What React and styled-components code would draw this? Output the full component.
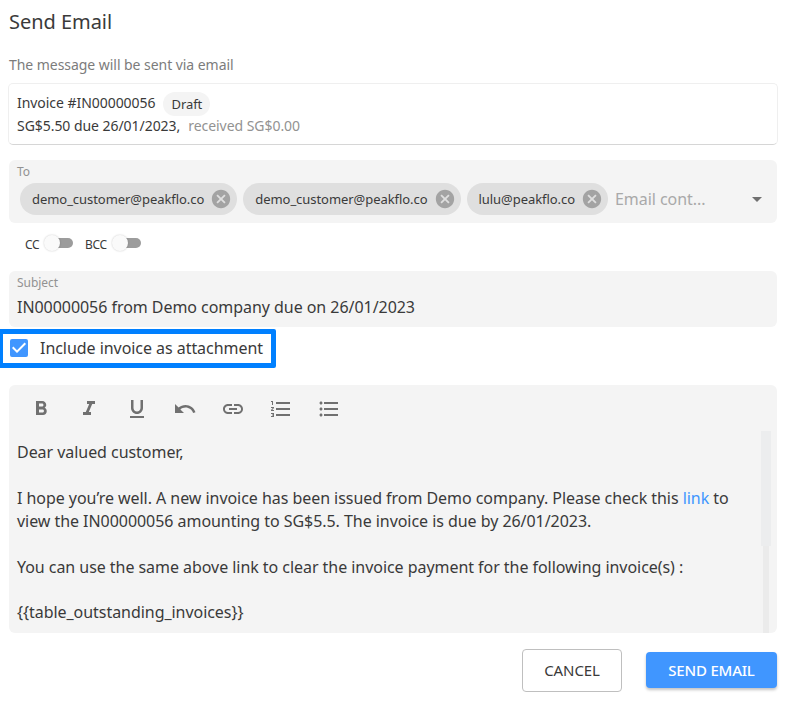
import React from "react";
import styled, { createGlobalStyle } from "styled-components";
import {
  MdArrowDropDown,
  MdCancel,
  MdCheckBox,
  MdFormatBold,
  MdFormatItalic,
  MdFormatListBulleted,
  MdFormatListNumbered,
  MdFormatUnderlined,
  MdLink,
  MdUndo,
} from "react-icons/md";

const GlobalStyle = createGlobalStyle`
  *, *::before, *::after { box-sizing: border-box; }
  body {
    margin: 0;
    background: #fff;
    color: #3a3a3a;
    font-family: "Noto Sans", sans-serif;
    font-size: 16px;
    letter-spacing: -0.048px;
  }
`;

const Dialog = styled.main`
  display: flex;
  flex-direction: column;
  width: 789px;
  height: 714px;
  padding: 0 12px 0 9px;
  overflow: hidden;
`;

const Title = styled.h1`
  margin: 0;
  font-size: 20px;
  font-weight: 400;
  line-height: 44px;
  letter-spacing: -0.04px;
`;

const Subtitle = styled.p`
  margin: 10px 0 7px;
  color: #7c7c7c;
  font-size: 14px;
  line-height: 22px;
`;

const InvoiceCard = styled.section`
  height: 62px;
  margin: 0 -1px;
  padding: 7px 8px 0;
  border: 1px solid #efefef;
  border-bottom-color: #d6d6d6;
  border-radius: 5px;
  font-size: 14px;
`;

const InvoiceRow = styled.div`
  display: flex;
  align-items: center;
  gap: 8px;
  height: 23px;
  white-space: pre;
`;

const StatusBadge = styled.span`
  height: 24px;
  padding: 0 8px;
  border-radius: 12px;
  background: #f4f4f4;
  font-size: 13px;
  line-height: 24px;
  margin-top: 2px;
`;

const Muted = styled.span`
  color: #929292;
`;

const Field = styled.section`
  height: ${({ $height }) => $height}px;
  margin-top: ${({ $gap }) => $gap}px;
  padding: 3px 8px 0;
  border-radius: 6px;
  background: #f4f4f4;
`;

const FieldLabel = styled.div`
  color: #929292;
  font-size: 12px;
  line-height: 18px;
`;

const Recipients = styled.div`
  display: flex;
  align-items: center;
  gap: 6px;
  margin: 2px 0 0 3px;
`;

const Chip = styled.span`
  display: flex;
  align-items: center;
  height: 32px;
  padding: 0 5px 0 12px;
  gap: 6px;
  border-radius: 16px;
  background: #dfdfdf;
  font-size: 13px;
  letter-spacing: -0.055px;

  svg { color: #a3a3a3; }
`;

const Placeholder = styled.span`
  flex: 1;
  margin-left: 1px;
  color: #a9a9a9;
`;

const DropIcon = styled(MdArrowDropDown)`
  color: #707070;
`;

const CopyOptions = styled.div`
  display: flex;
  height: 48px;
  padding: 8px 0 0 16px;
  gap: 12px;
`;

const CopyOption = styled.label`
  display: flex;
  height: 24px;
  gap: 4.7px;
  font-size: 12px;
  line-height: 27px;
  letter-spacing: -0.3px;
`;

const Switch = styled.span`
  display: flex;
  align-items: center;
  width: 29px;
  height: 24px;

  &::before {
    content: "";
    flex: none;
    z-index: 1;
    width: 16px;
    height: 16px;
    border-radius: 50%;
    background: #fafafa;
    box-shadow: 0 0 2px rgba(0, 0, 0, 0.22);
  }

  &::after {
    content: "";
    flex: none;
    width: 26px;
    height: 10px;
    margin-left: -13px;
    border-radius: 5px;
    background: #9c9c9c;
  }
`;

const SubjectValue = styled.div`
  line-height: 30px;
`;

const AttachmentOption = styled.label`
  display: flex;
  align-items: center;
  width: 276px;
  height: 39px;
  margin: 2px 0 0 -9px;
  padding: 0 0 1px 4px;
  gap: 9px;
  border: solid #0080ff;
  border-width: 5px 5px 5px 3px;
  border-radius: 0 2px 2px 0;

  svg { color: #4096ff; }
`;

const Editor = styled.section`
  display: flex;
  flex-direction: column;
  height: 248px;
  margin-top: 17px;
  border-radius: 6px;
  background: #f4f4f4;
  overflow: hidden;
`;

const Toolbar = styled.div`
  display: flex;
  flex: none;
  height: 46px;
  padding: 12px 0 0 20px;
  gap: 24px;
  color: #707070;
`;

const EditorBody = styled.div`
  display: flex;
  flex: 1;
  justify-content: space-between;
  padding: 0 6px 0 8px;
`;

const Message = styled.div`
  width: 730px;
  padding-top: 10px;
  line-height: 23px;
  white-space: pre;
`;

const Paragraph = styled.p`
  margin: 0 0 ${({ $space = 23 }) => $space}px;
`;

const MessageLink = styled.a`
  color: #4096ff;
`;

const ScrollTrack = styled.div`
  display: flex;
  flex-direction: column;
  align-items: center;
  width: 10px;

  &::before {
    content: "";
    width: 10px;
    height: 115px;
    background: #ecedee;
  }

  &::after {
    content: "";
    flex: 1;
    width: 6px;
    background: #ebebeb;
  }
`;

const Actions = styled.footer`
  display: flex;
  align-items: center;
  justify-content: flex-end;
  height: 43px;
  margin-top: 16px;
  gap: 24px;
`;

const Button = styled.button`
  width: 100px;
  height: 43px;
  padding: 0 0 2px;
  border: 1px solid #bfbfbf;
  border-radius: 4px;
  background: #fff;
  color: #3a3a3a;
  font: 400 15px "Noto Sans", sans-serif;
  letter-spacing: -0.1px;
`;

const PrimaryButton = styled(Button)`
  width: 131px;
  height: 36px;
  margin-bottom: 1px;
  padding: 0;
  border: 0;
  background: #4096ff;
  color: #fff;
  font-weight: 500;
  letter-spacing: -0.2px;
  box-shadow: 0 2px 3px rgba(0, 0, 0, 0.24);
`;

const recipients = ["demo_customer@peakflo.co", "demo_customer@peakflo.co", "lulu@peakflo.co"];
const tools = [
  MdFormatBold,
  MdFormatItalic,
  MdFormatUnderlined,
  MdUndo,
  MdLink,
  MdFormatListNumbered,
  MdFormatListBulleted,
];

export default function App() {
  return (
    <>
      <GlobalStyle />
      <Dialog>
        <Title>Send Email</Title>
        <Subtitle>The message will be sent via email</Subtitle>
        <InvoiceCard>
          <InvoiceRow>
            <span>Invoice #IN00000056</span>
            <StatusBadge>Draft</StatusBadge>
          </InvoiceRow>
          <InvoiceRow>
            <span>SG$5.50 due 26/01/2023,</span>
            <Muted>received SG$0.00</Muted>
          </InvoiceRow>
        </InvoiceCard>
        <Field $height={63} $gap={15}>
          <FieldLabel>To</FieldLabel>
          <Recipients>
            {recipients.map((email, i) => (
              <Chip key={i}>
                {email}
                <MdCancel size={22} />
              </Chip>
            ))}
            <Placeholder>Email cont...</Placeholder>
            <DropIcon size={24} />
          </Recipients>
        </Field>
        <CopyOptions>
          <CopyOption>CC<Switch /></CopyOption>
          <CopyOption>BCC<Switch /></CopyOption>
        </CopyOptions>
        <Field $height={56} $gap={0}>
          <FieldLabel>Subject</FieldLabel>
          <SubjectValue>IN00000056 from Demo company due on 26/01/2023</SubjectValue>
        </Field>
        <AttachmentOption>
          <MdCheckBox size={24} />
          Include invoice as attachment
        </AttachmentOption>
        <Editor>
          <Toolbar>
            {tools.map((Tool, i) => <Tool key={i} size={24} />)}
          </Toolbar>
          <EditorBody>
            <Message>
              <Paragraph>Dear valued customer,</Paragraph>
              <Paragraph>
                I hope you’re well. A new invoice has been issued from Demo company. Please check this{" "}
                <MessageLink>link</MessageLink> to{"\n"}view the IN00000056 amounting to SG$5.5. The invoice is due by 26/01/2023.
              </Paragraph>
              <Paragraph $space={22}>You can use the same above link to clear the invoice payment for the following invoice(s) :</Paragraph>
              <Paragraph>{"{{table_outstanding_invoices}}"}</Paragraph>
            </Message>
            <ScrollTrack />
          </EditorBody>
        </Editor>
        <Actions>
          <Button>CANCEL</Button>
          <PrimaryButton>SEND EMAIL</PrimaryButton>
        </Actions>
      </Dialog>
    </>
  );
}
